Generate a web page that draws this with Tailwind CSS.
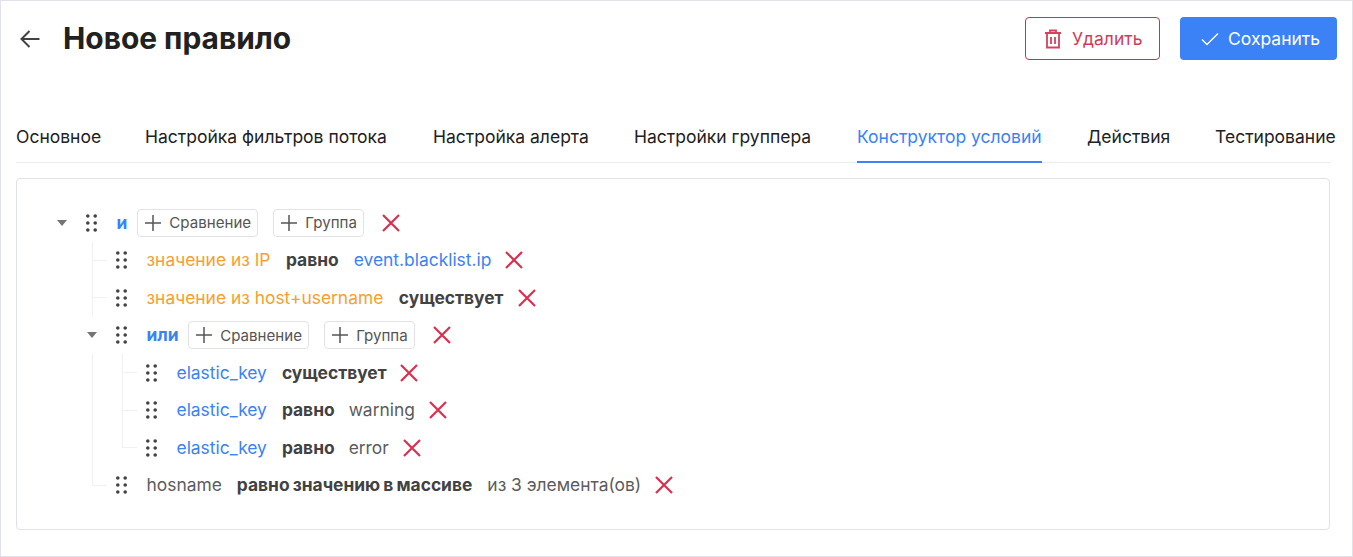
<!DOCTYPE html>
<html>
<head>
  <meta charset="UTF-8">
  <title>Новое правило</title>
  <script src="https://cdn.jsdelivr.net/npm/@tailwindcss/browser@4"></script>
</head>
<body class="bg-white">

<div class="h-[557px] w-[1353px] overflow-hidden border border-[#e1e1ea] font-['Inter',sans-serif] text-[#212121]">

  <!-- header -->
  <div class="flex h-[102px] items-start justify-between pl-[18px] pr-[15px] pt-[16px]">
    <div class="flex h-[44px] items-center">
      <svg width="22" height="22" viewBox="0 0 22 22" fill="none" stroke="#424242" stroke-width="2" class="mr-[22px]">
        <path d="M20.5 11H2.5M10.5 3L2.5 11L10.5 19" />
      </svg>
      <h1 class="-mt-[2px] text-[29.9px] leading-[44px] font-bold">Новое правило</h1>
    </div>
    <div class="flex gap-[20px]">
      <button class="flex h-[43px] w-[135px] items-center gap-[10px] rounded-[4px] border border-[#c9314f] pl-[18px] text-[17.5px] text-[#d23a58]">
        <svg width="18" height="20" viewBox="0 0 18 20" fill="none" stroke="#d9405e" stroke-width="1.8">
          <path d="M1 4H17M6 4V1.5H12V4M3 4V18.5H15V4M7 8V15M11 8V15" />
        </svg>
        <span class="pt-px">Удалить</span>
      </button>
      <button class="flex h-[43px] w-[157px] items-center gap-[9px] rounded-[4px] bg-[#3b82f6] pl-[21px] text-[17.5px] text-white">
        <svg width="18" height="14" viewBox="0 0 18 14" fill="none" stroke="#ffffff" stroke-width="1.4">
          <path d="M1 7.5L6 12.5L17 1.5" />
        </svg>
        <span class="pt-px">Сохранить</span>
      </button>
    </div>
  </div>

  <!-- tabs -->
  <div class="mx-[15px] flex h-[60px] w-[1315px] gap-[45px] whitespace-nowrap border-b border-[#ebebf2] pt-[20px] text-[17.5px] leading-[28px]">
    <div class="w-[84px] shrink-0">Основное</div>
    <div class="w-[243px] shrink-0">Настройка фильтров потока</div>
    <div class="w-[156px] shrink-0">Настройка алерта</div>
    <div class="w-[178px] shrink-0">Настройки группера</div>
    <div class="-mb-px h-[40px] w-[185px] shrink-0 border-b-2 border-[#3b82f6] text-[#3b82f6]">Конструктор условий</div>
    <div class="w-[83px] shrink-0">Действия</div>
    <div class="shrink-0">Тестирование</div>
  </div>

  <!-- condition tree -->
  <div class="mx-[15px] mt-[15px] h-[352px] w-[1314px] rounded-[4px] border border-[#e1e1ea] pl-[30px] pt-[25px] text-[17.4px] text-[#424242]">

    <div class="flex h-[37.5px] items-center">
      <div class="flex w-[30px] justify-center"><svg width="10" height="6"><path d="M0 0H10L5 6Z" fill="#757575"/></svg></div>
      <div class="flex w-[30px] justify-center pr-px"><svg width="11" height="18" fill="#424242"><circle cx="1.8" cy="2" r="1.8"/><circle cx="9.2" cy="2" r="1.8"/><circle cx="1.8" cy="9" r="1.8"/><circle cx="9.2" cy="9" r="1.8"/><circle cx="1.8" cy="16" r="1.8"/><circle cx="9.2" cy="16" r="1.8"/></svg></div>
      <span class="ml-[9.5px] font-bold text-[#3b82f6]">и</span>
      <button class="ml-[9.5px] flex h-[28px] w-[121px] items-center gap-[8.5px] rounded-[4px] border border-[#e1e1ea] pl-[7px] text-[15.1px] text-[#555]"><svg width="16" height="16" fill="none" stroke="#555555" stroke-width="1.5"><path d="M8 0V16M0 8H16"/></svg><span class="pt-[2px]">Сравнение</span></button>
      <button class="ml-[15px] flex h-[28px] w-[91px] items-center gap-[8.5px] rounded-[4px] border border-[#e1e1ea] pl-[7px] text-[15.1px] text-[#555]"><svg width="16" height="16" fill="none" stroke="#555555" stroke-width="1.5"><path d="M8 0V16M0 8H16"/></svg><span class="pt-[2px]">Группа</span></button>
      <svg class="ml-[18px]" width="18" height="18" fill="none" stroke="#d9304f" stroke-width="2.2"><path d="M1 1L17 17M17 1L1 17"/></svg>
    </div>

    <div class="relative ml-[30px]">
      <div class="absolute left-[15px] top-0 h-[243px] w-px bg-[#f0f0f5]"></div>

      <div class="relative flex h-[37.5px] items-center pl-[30px]">
        <div class="absolute left-[15px] top-[18px] h-px w-[15px] bg-[#f0f0f5]"></div>
        <div class="flex w-[30px] justify-center pr-px"><svg width="11" height="18" fill="#424242"><circle cx="1.8" cy="2" r="1.8"/><circle cx="9.2" cy="2" r="1.8"/><circle cx="1.8" cy="9" r="1.8"/><circle cx="9.2" cy="9" r="1.8"/><circle cx="1.8" cy="16" r="1.8"/><circle cx="9.2" cy="16" r="1.8"/></svg></div>
        <span class="ml-[9.5px] text-[#f5a030]">значение из IP</span>
        <span class="ml-[15.5px] font-bold">равно</span>
        <span class="ml-[15px] text-[#3b82f6]">event.blacklist.ip</span>
        <svg class="ml-[13.5px]" width="18" height="18" fill="none" stroke="#d9304f" stroke-width="2.2"><path d="M1 1L17 17M17 1L1 17"/></svg>
      </div>

      <div class="relative flex h-[37.5px] items-center pl-[30px]">
        <div class="absolute left-[15px] top-[18px] h-px w-[15px] bg-[#f0f0f5]"></div>
        <div class="flex w-[30px] justify-center pr-px"><svg width="11" height="18" fill="#424242"><circle cx="1.8" cy="2" r="1.8"/><circle cx="9.2" cy="2" r="1.8"/><circle cx="1.8" cy="9" r="1.8"/><circle cx="9.2" cy="9" r="1.8"/><circle cx="1.8" cy="16" r="1.8"/><circle cx="9.2" cy="16" r="1.8"/></svg></div>
        <span class="ml-[9.5px] text-[#f5a030]">значение из host+username</span>
        <span class="ml-[15.5px] font-bold">существует</span>
        <svg class="ml-[15px]" width="18" height="18" fill="none" stroke="#d9304f" stroke-width="2.2"><path d="M1 1L17 17M17 1L1 17"/></svg>
      </div>

      <div class="relative flex h-[37.5px] items-center bg-white">
        <div class="flex w-[30px] justify-center"><svg width="10" height="6"><path d="M0 0H10L5 6Z" fill="#757575"/></svg></div>
        <div class="flex w-[30px] justify-center pr-px"><svg width="11" height="18" fill="#424242"><circle cx="1.8" cy="2" r="1.8"/><circle cx="9.2" cy="2" r="1.8"/><circle cx="1.8" cy="9" r="1.8"/><circle cx="9.2" cy="9" r="1.8"/><circle cx="1.8" cy="16" r="1.8"/><circle cx="9.2" cy="16" r="1.8"/></svg></div>
        <span class="ml-[9.5px] font-bold text-[#3b82f6]">или</span>
        <button class="ml-[9px] flex h-[28px] w-[121px] items-center gap-[8.5px] rounded-[4px] border border-[#e1e1ea] pl-[7px] text-[15.1px] text-[#555]"><svg width="16" height="16" fill="none" stroke="#555555" stroke-width="1.5"><path d="M8 0V16M0 8H16"/></svg><span class="pt-[2px]">Сравнение</span></button>
        <button class="ml-[15px] flex h-[28px] w-[91px] items-center gap-[8.5px] rounded-[4px] border border-[#e1e1ea] pl-[7px] text-[15.1px] text-[#555]"><svg width="16" height="16" fill="none" stroke="#555555" stroke-width="1.5"><path d="M8 0V16M0 8H16"/></svg><span class="pt-[2px]">Группа</span></button>
        <svg class="ml-[18.5px]" width="18" height="18" fill="none" stroke="#d9304f" stroke-width="2.2"><path d="M1 1L17 17M17 1L1 17"/></svg>
      </div>

      <div class="relative ml-[30px]">
        <div class="absolute left-[15px] top-0 h-[94px] w-px bg-[#f0f0f5]"></div>

        <div class="relative flex h-[37.5px] items-center pl-[30px]">
          <div class="absolute left-[15px] top-[18px] h-px w-[15px] bg-[#f0f0f5]"></div>
          <div class="flex w-[30px] justify-center pr-px"><svg width="11" height="18" fill="#424242"><circle cx="1.8" cy="2" r="1.8"/><circle cx="9.2" cy="2" r="1.8"/><circle cx="1.8" cy="9" r="1.8"/><circle cx="9.2" cy="9" r="1.8"/><circle cx="1.8" cy="16" r="1.8"/><circle cx="9.2" cy="16" r="1.8"/></svg></div>
          <span class="ml-[9.5px] text-[#3b82f6]">elastic_key</span>
          <span class="ml-[15px] font-bold">существует</span>
          <svg class="ml-[13.5px]" width="18" height="18" fill="none" stroke="#d9304f" stroke-width="2.2"><path d="M1 1L17 17M17 1L1 17"/></svg>
        </div>

        <div class="relative flex h-[37.5px] items-center pl-[30px]">
          <div class="absolute left-[15px] top-[18px] h-px w-[15px] bg-[#f0f0f5]"></div>
          <div class="flex w-[30px] justify-center pr-px"><svg width="11" height="18" fill="#424242"><circle cx="1.8" cy="2" r="1.8"/><circle cx="9.2" cy="2" r="1.8"/><circle cx="1.8" cy="9" r="1.8"/><circle cx="9.2" cy="9" r="1.8"/><circle cx="1.8" cy="16" r="1.8"/><circle cx="9.2" cy="16" r="1.8"/></svg></div>
          <span class="ml-[9.5px] text-[#3b82f6]">elastic_key</span>
          <span class="ml-[15px] font-bold">равно</span>
          <span class="ml-[14px] text-[#5c5c5c]">warning</span>
          <svg class="ml-[14px]" width="18" height="18" fill="none" stroke="#d9304f" stroke-width="2.2"><path d="M1 1L17 17M17 1L1 17"/></svg>
        </div>

        <div class="relative flex h-[37.5px] items-center pl-[30px]">
          <div class="absolute left-[15px] top-[18px] h-px w-[15px] bg-[#f0f0f5]"></div>
          <div class="flex w-[30px] justify-center pr-px"><svg width="11" height="18" fill="#424242"><circle cx="1.8" cy="2" r="1.8"/><circle cx="9.2" cy="2" r="1.8"/><circle cx="1.8" cy="9" r="1.8"/><circle cx="9.2" cy="9" r="1.8"/><circle cx="1.8" cy="16" r="1.8"/><circle cx="9.2" cy="16" r="1.8"/></svg></div>
          <span class="ml-[9.5px] text-[#3b82f6]">elastic_key</span>
          <span class="ml-[15px] font-bold">равно</span>
          <span class="ml-[14px] text-[#5c5c5c]">error</span>
          <svg class="ml-[14px]" width="18" height="18" fill="none" stroke="#d9304f" stroke-width="2.2"><path d="M1 1L17 17M17 1L1 17"/></svg>
        </div>
      </div>

      <div class="relative flex h-[37.5px] items-center pl-[30px]">
        <div class="absolute left-[15px] top-[18px] h-px w-[15px] bg-[#f0f0f5]"></div>
        <div class="flex w-[30px] justify-center pr-px"><svg width="11" height="18" fill="#424242"><circle cx="1.8" cy="2" r="1.8"/><circle cx="9.2" cy="2" r="1.8"/><circle cx="1.8" cy="9" r="1.8"/><circle cx="9.2" cy="9" r="1.8"/><circle cx="1.8" cy="16" r="1.8"/><circle cx="9.2" cy="16" r="1.8"/></svg></div>
        <span class="ml-[9.5px] text-[#5c5c5c]">hosname</span>
        <span class="ml-[15px] font-bold [word-spacing:-1px]">равно значению в массиве</span>
        <span class="ml-[15px] text-[#5c5c5c]">из 3 элемента(ов)</span>
        <svg class="ml-[13.5px]" width="18" height="18" fill="none" stroke="#d9304f" stroke-width="2.2"><path d="M1 1L17 17M17 1L1 17"/></svg>
      </div>
    </div>
  </div>
</div>

</body>
</html>
